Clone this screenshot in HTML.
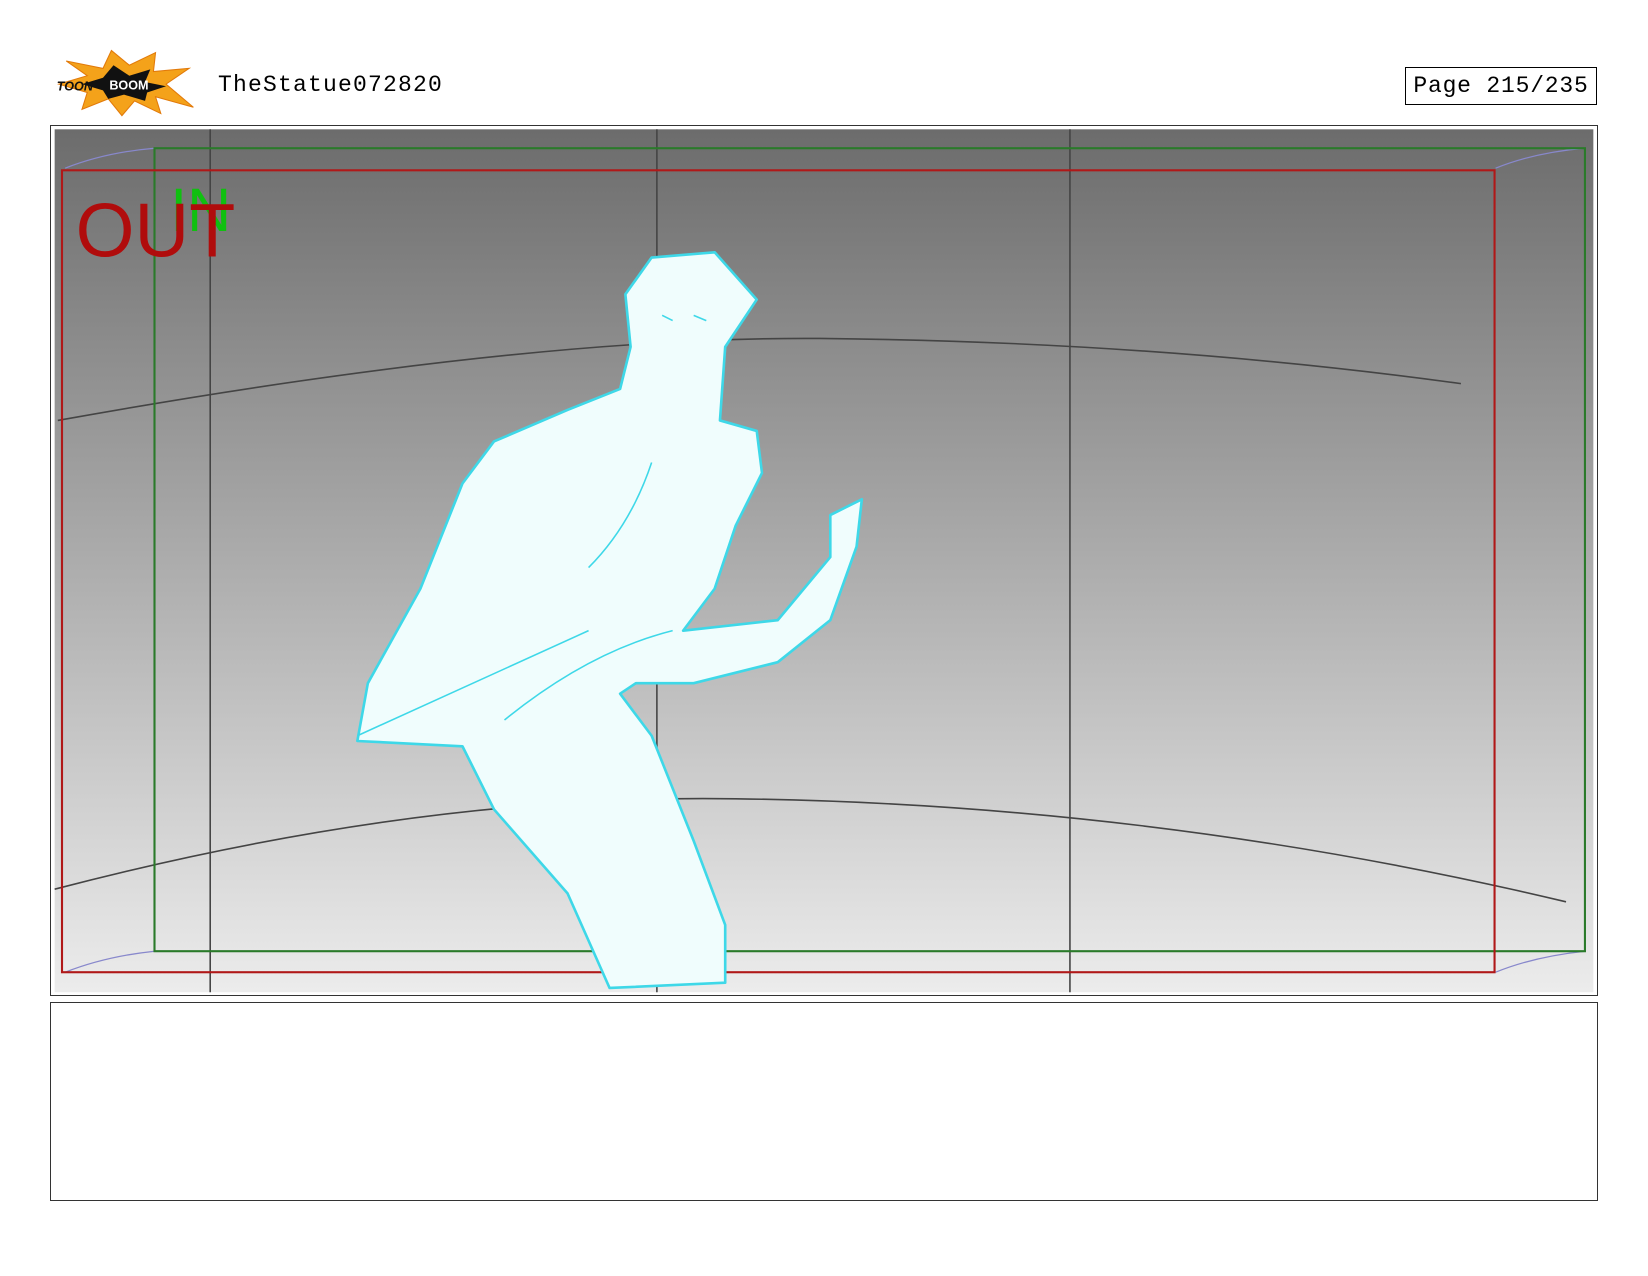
<!DOCTYPE html>
<html><head><meta charset="utf-8"><style>
html,body{margin:0;padding:0;background:#fff;width:1648px;height:1276px;overflow:hidden;position:relative;font-family:"Liberation Mono",monospace}
.t{position:absolute;left:218px;top:72px;font-size:23px;letter-spacing:1.2px;color:#000}
.pg{position:absolute;left:1405px;top:67px;width:190px;height:36px;border:1.5px solid #000;font-size:23px;letter-spacing:0.8px;line-height:36px;text-align:center}
.fr{position:absolute;left:50px;top:125px;width:1546px;height:869px;border:1.5px solid #333}
.nt{position:absolute;left:50px;top:1002px;width:1546px;height:197px;border:1.5px solid #333}
</style></head><body>
<div class="t">TheStatue072820</div>
<div class="pg">Page 215/235</div>
<div class="fr"></div>
<div class="nt"></div>
<svg width="1648" height="1276" viewBox="0 0 1568 1214" style="position:absolute;left:0;top:0">
<defs><linearGradient id="g" x1="0" y1="0" x2="0" y2="1"><stop offset="0" stop-color="#6c6c6c"/><stop offset="1" stop-color="#ececec"/></linearGradient></defs>
<rect x="52" y="123" width="1464" height="821" fill="url(#g)"/>
<g stroke="#444" fill="none" stroke-width="1.5">
<path d="M200 123V944M625 123V944M1018 123V944"/>
<path d="M55 400Q500 320 780 322Q1100 325 1390 365"/>
<path d="M52 846Q400 755 700 760Q1100 765 1490 858"/>
</g>
<g fill="none" stroke="#8888cc" stroke-width="1.2"><path d="M62 160Q100 145 147 141M1423 160Q1460 145 1508 141M62 925Q100 910 147 905M1423 925Q1460 910 1508 905"/></g>
<rect x="147" y="141" width="1361" height="764" fill="none" stroke="#2a7a2a" stroke-width="2"/>
<rect x="59" y="162" width="1363" height="763" fill="none" stroke="#b01818" stroke-width="2"/>
<path d="M620 245L680 240L720 285L690 330L685 400L720 410L725 450L700 500L680 560L650 600L740 590L790 530L790 490L820 475L815 520L790 590L740 630L660 650L605 650L590 660L620 700L660 800L690 880L690 935L580 940L540 850L470 770L440 710L340 705L350 650L400 560L440 460L470 420L540 390L590 370L600 330L595 280Z" fill="#f0fdfd" stroke="#3ed8e8" stroke-width="2.5" stroke-linejoin="round"/>
<g fill="none" stroke="#3ed8e8" stroke-width="1.5"><path d="M340 700Q450 650 560 600M480 685Q560 620 640 600M620 440Q600 500 560 540M630 300L640 305M660 300L672 305"/></g>
<text x="162" y="220" font-family="Liberation Sans,sans-serif" font-size="58" fill="#10c010">IN</text>
<text x="72" y="244" font-family="Liberation Sans,sans-serif" font-size="72" fill="#b00c0c">OUT</text>
<g transform="translate(118,80)">
<path d="M-62 0L-35 -8L-55 -22L-20 -15L-12 -32L5 -18L30 -30L28 -12L62 -15L40 0L66 22L30 12L35 28L10 16L-2 30L-15 14L-40 24L-35 8Z" fill="#f4a21a" stroke="#e27a0a"/>
<path d="M-40 0L-20 -6L-10 -18L5 -8L25 -14L20 -2L40 2L22 8L20 16L0 10L-15 14L-20 6Z" fill="#111"/>
<text x="-64" y="6" font-family="Liberation Sans,sans-serif" font-weight="bold" font-style="italic" font-size="12" fill="#111">TOON</text>
<text x="-14" y="5" font-family="Liberation Sans,sans-serif" font-weight="bold" font-size="12" fill="#fff">BOOM</text>
</g>
</svg>
</body></html>
